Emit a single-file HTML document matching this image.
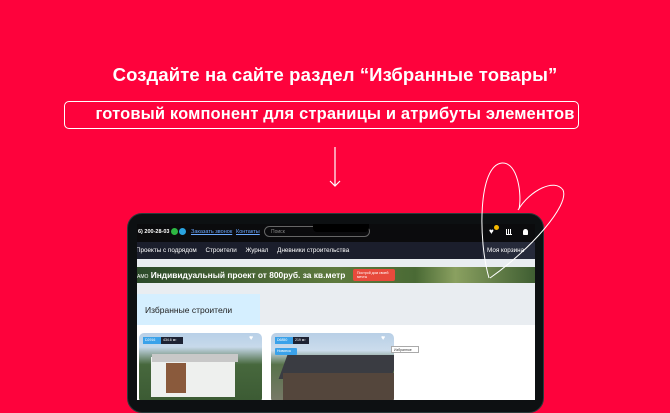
<!DOCTYPE html>
<html><head><meta charset="utf-8"><style>
*{margin:0;padding:0;box-sizing:border-box}
body{width:670px;height:400px;overflow:hidden;background:#fe023c;font-family:"Liberation Sans","DejaVu Sans",sans-serif;position:relative}
.a{position:absolute}
.t{left:0;width:670px;text-align:center;color:#fff}
</style></head><body>
<div class="a t" style="top:64px;font-size:18.5px;font-weight:bold;letter-spacing:0.1px">Создайте на сайте раздел “Избранные товары”</div>
<div class="a" style="left:64px;top:101px;width:515px;height:28px;border:1px solid #fff;border-radius:5px"></div>
<div class="a t" style="top:105px;font-size:16.5px;font-weight:bold;letter-spacing:0.15px">готовый компонент для страницы и атрибуты элементов</div>
<svg class="a" style="left:0;top:0" width="670" height="400">
<path d="M335 147 V186 M330 181 L335 186 L340 181" stroke="#fff" stroke-width="1.2" fill="none"/>
</svg>
<div class="a" style="left:127px;top:213px;width:417px;height:200px;background:#0d1012;border-radius:15px;border:1px solid #2a3a3a"></div>
<div class="a" style="left:137px;top:224px;width:398px;height:176px;background:#fff;overflow:hidden">
 <div class="a" style="left:0;top:0;width:398px;height:18px;background:#0b0b0d"></div>
 <div class="a" style="left:1px;top:5px;font-size:5.5px;color:#fff;font-weight:bold">6) 200-28-03</div>
 <div class="a" style="left:34px;top:4px;width:7px;height:7px;border-radius:50%;background:#2db742"></div>
 <div class="a" style="left:42px;top:4px;width:7px;height:7px;border-radius:50%;background:#2aa3e0"></div>
 <div class="a" style="left:54px;top:5px;font-size:5.5px;color:#6aa8ff;text-decoration:underline">Заказать звонок</div>
 <div class="a" style="left:99px;top:5px;font-size:5.5px;color:#6aa8ff;text-decoration:underline">Контакты</div>
 <div class="a" style="left:127px;top:2px;width:106px;height:11px;border:1px solid #666;border-radius:6px;font-size:5px;color:#888;padding:2px 6px">Поиск</div>
 <div class="a" style="left:223px;top:3px;font-size:6px;color:#fff">⌕</div>
 <div class="a" style="left:176px;top:0;width:56px;height:8px;background:#000;border-radius:0 0 4px 4px"></div>
 <div class="a" style="left:352px;top:3px;font-size:8px;color:#fff">♥</div>
 <div class="a" style="left:357px;top:1px;width:5px;height:5px;border-radius:50%;background:#f5b800"></div>
 <div class="a" style="left:369px;top:5px;width:6px;height:6px;border-bottom:1px solid #fff;background:linear-gradient(90deg,#fff 1px,transparent 1px,transparent 2px,#fff 2px,#fff 3px,transparent 3px,transparent 4px,#fff 4px,#fff 5px,transparent 5px)"></div>
 <div class="a" style="left:386px;top:5px;width:5px;height:6px;background:#fff;border-radius:3px 3px 1px 1px"></div>
 <div class="a" style="left:0;top:18px;width:398px;height:17px;background:#1b1e2c"></div>
 <div class="a" style="left:-1px;top:23px;font-size:6.3px;color:#fff;white-space:nowrap">Проекты с подрядом&nbsp;&nbsp;&nbsp;&nbsp;&nbsp;Строители&nbsp;&nbsp;&nbsp;&nbsp;&nbsp;Журнал&nbsp;&nbsp;&nbsp;&nbsp;&nbsp;Дневники строительства</div>
 <div class="a" style="left:345px;top:18px;width:53px;height:17px;background:#262a3a;font-size:6.3px;color:#fff;padding:5px 5px;white-space:nowrap">Моя корзина</div>
 <div class="a" style="left:0;top:35px;width:398px;height:135px;background:#e9edf1"></div>
 <div class="a" style="left:0;top:43px;width:398px;height:16px;background:linear-gradient(90deg,#2c4a2a,#5e7a3e 50%,#4a6a35 70%,#8aa060 80%,#3f5e32)"></div>
 <div class="a" style="left:0;top:46px;font-size:8.4px;color:#fff;font-weight:bold;white-space:nowrap"><span style="font-size:5px;font-weight:normal">АМО</span> Индивидуальный проект от 800руб. за кв.метр</div>
 <div class="a" style="left:216px;top:45px;width:42px;height:12px;background:#e84a3c;border-radius:2px;font-size:3.5px;color:#fff;padding:2px 4px;line-height:4px">Построй дом своей мечты</div>
 <div class="a" style="left:0;top:70px;width:123px;height:31px;background:#d5efff;font-size:8.5px;color:#222;padding:11px 8px">Избранные строители</div>
 <div class="a" style="left:0;top:101px;width:398px;height:80px;background:#fff"></div>
 <div class="a" style="left:2px;top:109px;width:123px;height:70px;border-radius:5px;overflow:hidden;background:linear-gradient(180deg,#b8d0e8 0,#c7d9ea 20%,#47683d 45%,#3b5a33 100%)">
  <div class="a" style="left:12px;top:24px;width:84px;height:40px;background:#eef0ee"></div>
  <div class="a" style="left:27px;top:30px;width:20px;height:30px;background:#8a5a3c"></div>
  <div class="a" style="left:13px;top:21px;width:86px;height:8px;background:#c8c8c8"></div>
  <div class="a" style="left:4px;top:4px;width:18px;height:7px;background:#3aa2ea;font-size:3.5px;color:#fff;padding:1px 2px">D2916</div>
  <div class="a" style="left:22px;top:4px;width:22px;height:7px;background:#1d2233;font-size:3.5px;color:#fff;padding:1px 2px">434.6 м²</div>
  <div class="a" style="left:110px;top:2px;font-size:7px;color:#fff">♥</div>
 </div>
 <div class="a" style="left:134px;top:109px;width:123px;height:70px;border-radius:5px;overflow:hidden;background:linear-gradient(180deg,#b8cfe6 0,#cbdcec 25%,#58724a 45%,#7a7a6a 100%)">
  <div class="a" style="left:12px;top:22px;width:112px;height:24px;background:#3a3c42;transform:skewX(-20deg)"></div>
  <div class="a" style="left:12px;top:40px;width:112px;height:28px;background:#54463c"></div>
  <div class="a" style="left:4px;top:4px;width:18px;height:7px;background:#3aa2ea;font-size:3.5px;color:#fff;padding:1px 2px">D6850</div>
  <div class="a" style="left:22px;top:4px;width:16px;height:7px;background:#1d2233;font-size:3.5px;color:#fff;padding:1px 2px">219 м²</div>
  <div class="a" style="left:4px;top:15px;width:22px;height:7px;background:#3aa2ea;font-size:3.5px;color:#fff;padding:1px 2px;border-radius:1px">Новинка</div>
  <div class="a" style="left:110px;top:2px;font-size:7px;color:#fff">♥</div>
 </div>
 <div class="a" style="left:254px;top:122px;width:28px;height:7px;background:#fff;border:1px solid #aaa;font-size:3.5px;color:#333;padding:1px 2px">Избранное</div>
</div>
<svg class="a" style="left:0;top:0" width="670" height="400">
<path d="M489 278 C478 240 478 165 502 163 C518 162 522 195 519 209 M518 210 C530 190 555 178 563 190 C570 205 530 250 490 278" stroke="#fff" stroke-width="1" fill="none"/>
</svg>
</body></html>
